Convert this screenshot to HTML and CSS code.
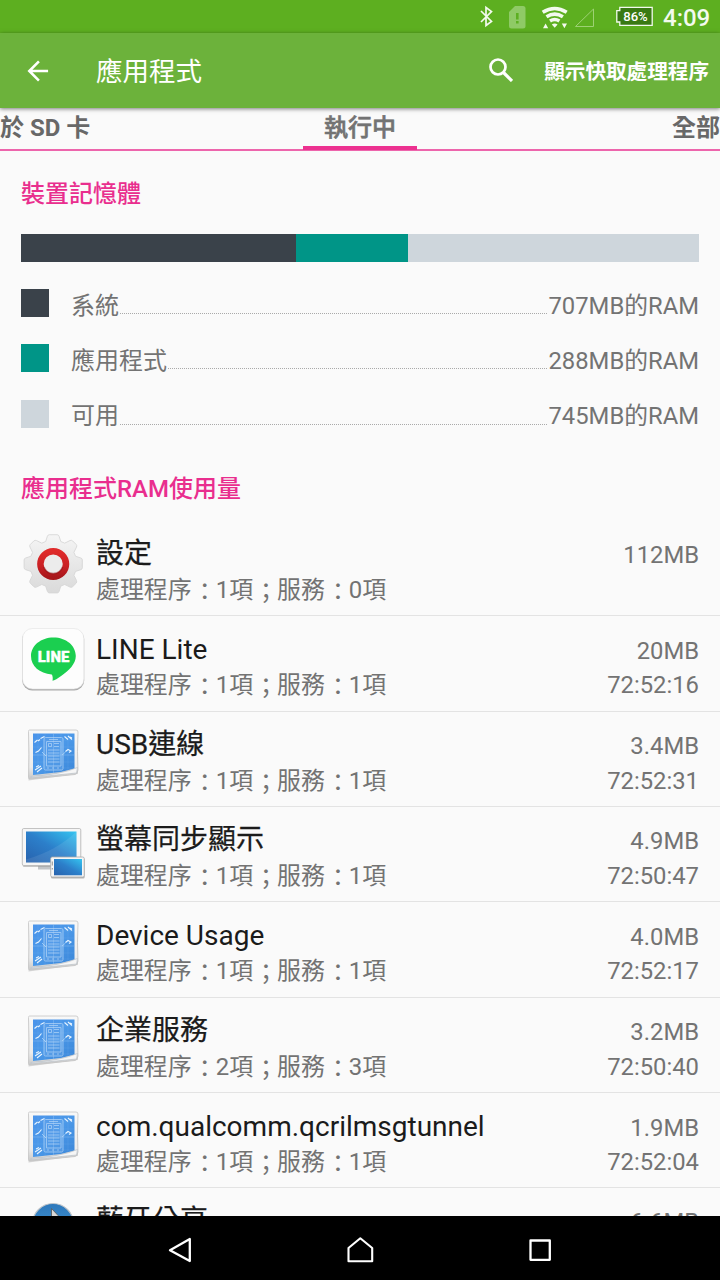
FILE: index.html
```html
<!DOCTYPE html>
<html lang="zh-Hant">
<head>
<meta charset="utf-8">
<title>應用程式</title>
<link rel="stylesheet" href="styles.css">
</head>
<body>
<svg class="defs" width="0" height="0" aria-hidden="true">
  <defs>
    <linearGradient id="sheet" x1="0" y1="0" x2="0" y2="1"><stop offset="0" stop-color="#f8f8f8"/><stop offset=".75" stop-color="#ececec"/><stop offset="1" stop-color="#c8c8c8"/></linearGradient>
    <linearGradient id="blueprint" x1="0" y1="0" x2="1" y2="1"><stop offset="0" stop-color="#4b94ea"/><stop offset=".5" stop-color="#4b98e8"/><stop offset="1" stop-color="#3a86d8"/></linearGradient>
    <linearGradient id="screen" x1="0" y1="1" x2="1" y2="0"><stop offset="0" stop-color="#2862ad"/><stop offset=".5" stop-color="#2c7fca"/><stop offset="1" stop-color="#35c4f0"/></linearGradient>
    <linearGradient id="gear" x1="0" y1="0" x2="0" y2="1"><stop offset="0" stop-color="#f5f5f5"/><stop offset="1" stop-color="#dadada"/></linearGradient>
    <linearGradient id="ring" x1="0" y1="0" x2="0" y2="1"><stop offset="0" stop-color="#df2a2a"/><stop offset=".6" stop-color="#c92024"/><stop offset="1" stop-color="#a8171b"/></linearGradient>
    <linearGradient id="ball" x1="0" y1="0" x2="0" y2="1"><stop offset="0" stop-color="#2d78bb"/><stop offset="1" stop-color="#4aa0de"/></linearGradient>
    <symbol id="app-icon" viewBox="0 0 64 64">
      <path d="M7.500 8.500h49L57 50 7.500 56.500z" fill="#999" opacity=".35" transform="translate(0 1)"/>
      <path d="M8.500 7H55q2 0 2 2-1 20 0 38-.5 4-3 4.500L9 56q-1.500 0-1.500-1.500 1-23 0-46Q7.500 7 8.500 7z" fill="url(#sheet)" stroke="#c4c4c4" stroke-width=".8"/>
      <path d="M12 10.500h41.500V45.500L40 49 12 52z" fill="url(#blueprint)"/>
      <path d="M10 53.500Q40 51.500 56.500 44.500l-1 5.500-45.500 4.500z" fill="#f6f6f6" stroke="#b4bcc4" stroke-width=".6"/>
      <path d="M17 11v40M24 11v40M40 11v38M47 11v36M12 17h41M12 24h41M12 39h41M12 45h40" stroke="#8fc1f4" stroke-width=".5" opacity=".3"/>
      <path d="M32.500 11v39M12 32h41" stroke="#8fc1f4" stroke-width=".9" opacity=".5"/>
      <path d="M24.500 14.500h16q1.500 0 1.500 1.500v29.500q0 1.500-1.500 1.500H24.500q-1.500 0-1.500-1.500V16q0-1.500 1.500-1.500zM25.500 18.500H40V43H25.500zM28 16.500h9" fill="#8abaf0" fill-opacity=".22" stroke="#b9d8f8" stroke-width="1" opacity=".7"/>
      <path d="M27.500 20.500h3v3h-3zM33 20.500h5M33 23.500h5M27 27h11.500M27 30h11.500M27 33h11.500M27 36h11.500M27 39h11.500M26 45h2m3 0h2m3 0h2" fill="none" stroke="#d6e9fc" stroke-width=".8" opacity=".65"/>
      <path d="m13.500 19.500 3-2.500M17 18l2-1.500M19.500 15.500l4-2M14.500 29.500l3-1.500 3-3.500M43.500 13.500l3.500 3M47 13l4 3.500M49 14l2 1M44.500 28.500l2.500-2 3 1.500-2 1.500M14 47l6-4M16 49l5-4M15 44l3-1.500" fill="none" stroke="#e8f4ff" stroke-width="1.100"/>
      <path d="m21 29 4 4M41 32l3.500-3" stroke="#bcdcfa" stroke-width=".7"/>
    </symbol>
  </defs>
</svg>
<div class="phone">
  <div class="status">
    <svg class="status-icons" viewBox="0 0 200 34" width="200" height="34">
      <path d="m1 11 10.500 10.500-5.500 4V7.500l5.500 4L1 22" fill="none" stroke="#f3faee" stroke-width="1.700"/>
      <path d="M35 6h8q2.500 0 2.500 2.500v17.500q0 2.500-2.500 2.500H31.500q-2.500 0-2.500-2.500V12z" fill="#8fca66"/>
      <path d="M36 13h2.600v6.500H36zM36 21h2.600v2.600H36z" fill="#5daf21"/>
      <path d="M62.700 12.300Q74.700 4.700 86.700 12.300M66.500 16.700Q74.700 11.500 82.900 16.700M70 21Q74.700 18 79.400 21" fill="none" stroke="#f3faee" stroke-width="3.500"/>
      <path d="m71.800 24.400q2.900-1.700 5.800 0L74.700 27.800zM63 28.300l2.600-4.800 2.600 4.800zM81.800 23.500h5.200l-2.600 4.800z" fill="#f3faee"/>
      <path d="M113.500 9v17.500H95.500z" fill="none" stroke="#9dd174" stroke-width="1"/>
      <path d="M139.800 7.300h32.400v18h-32.400v-3.300h-3v-11.400h3z" fill="#397a13" stroke="#f3faee" stroke-width="1.300"/>
      <text x="155.500" y="21.300" text-anchor="middle" class="battery" textLength="24.500" lengthAdjust="spacingAndGlyphs">86%</text>
    </svg>
    <span class="clock">4:09</span>
  </div>
  <header class="appbar">
    <svg class="back" viewBox="0 0 24 24" width="22" height="22"><path d="M23 12H3M13 1.500 2.500 12 13 22.500" fill="none" stroke="#fff" stroke-width="2.800"/></svg>
    <h1>應用程式</h1>
    <svg class="search" viewBox="0 0 24 24" width="24" height="24"><circle cx="9" cy="9" r="7.500" fill="none" stroke="#fff" stroke-width="2.700"/><path d="m14.500 14.500 8.500 8.500" stroke="#fff" stroke-width="3.200"/></svg>
    <span class="action">顯示快取處理程序</span>
  </header>
  <nav class="tabs">
    <span class="tab">於 SD 卡</span><span class="tab current">執行中</span><span class="tab last">全部</span>
  </nav>
  <main>
    <section class="memory">
      <h2>裝置記憶體</h2>
      <div class="bar"><i class="system"></i><i class="apps"></i><i class="free"></i></div>
      <div class="legend"><i class="system"></i><span>系統</span><b></b><span class="value">707MB的RAM</span></div>
      <div class="legend"><i class="apps"></i><span>應用程式</span><b></b><span class="value">288MB的RAM</span></div>
      <div class="legend"><i class="free"></i><span>可用</span><b></b><span class="value">745MB的RAM</span></div>
      <h2 class="usage">應用程式RAM使用量</h2>
    </section>
    <ul class="list">
      <li class="row">
        <svg class="icon" viewBox="0 0 64 64">
          <g transform="translate(1.200 -.7) scale(.97)">
            <path d="M28 2.500h8q1.500 0 2 1.500l1.800 5.500 4 1.700 5.500-2.700q1.500-.7 2.700.4l3.600 3.600q1.100 1.200.4 2.700l-2.700 5.500 1.700 4 5.500 1.800q1.500.5 1.500 2v8q0 1.500-1.500 2L55 40.300l-1.700 4 2.700 5.500q.7 1.500-.4 2.700L52 56.100q-1.200 1.100-2.700.4l-5.500-2.700-4 1.700L38 61q-.5 1.500-2 1.500h-8q-1.500 0-2-1.500l-1.800-5.500-4-1.700-5.500 2.700q-1.500.7-2.700-.4l-3.600-3.600q-1.100-1.200-.4-2.700l2.700-5.500-1.700-4L3.500 38.500Q2 38 2 36.500v-8q0-1.500 1.500-2L9 24.700l1.700-4L8 15.200q-.7-1.500.4-2.700L12 8.900q1.200-1.100 2.700-.4l5.500 2.700 4-1.700L26 4q.5-1.500 2-1.500z" fill="url(#gear)" stroke="#d6d6d6" stroke-width=".9" stroke-linejoin="round"/>
          </g>
          <circle cx="32.200" cy="31" r="12.800" fill="#ececec" stroke="url(#ring)" stroke-width="6.500"/>
          <path d="M22.800 34a10 10 0 0 0 18.800 0" fill="none" stroke="#8f1216" stroke-width="1.800" opacity=".5"/>
        </svg>
        <div class="text"><span class="title cjk">設定</span><span class="sub">處理程序<em>：</em>1項<em>；</em>服務<em>：</em>0項</span></div>
        <div class="stats"><span>112MB</span></div>
      </li>
      <li class="row">
        <svg class="icon" viewBox="0 0 64 64">
          <rect x="1.200" y="1.500" width="62" height="61" rx="10" fill="#aaa"/>
          <rect x="1.500" y=".5" width="61.400" height="60.500" rx="10" fill="#fdfdfd" stroke="#e2e2e2" stroke-width=".6"/>
          <path d="M32.500 9.500c12.500 0 22.300 8 22.300 18.500 0 8-7 14.500-14 19.500-4 3-7.500 5-9.300 5.200.5-2 .2-5.200-.8-6.200C18.500 45.500 10 38 10 28 10 17.500 20 9.500 32.500 9.500z" fill="#1bcf50"/>
          <text x="32.500" y="33.500" text-anchor="middle" class="logo" textLength="31.500" lengthAdjust="spacingAndGlyphs">LINE</text>
        </svg>
        <div class="text"><span class="title">LINE Lite</span><span class="sub">處理程序<em>：</em>1項<em>；</em>服務<em>：</em>1項</span></div>
        <div class="stats"><span>20MB</span><span>72:52:16</span></div>
      </li>
      <li class="row">
        <svg class="icon"><use href="#app-icon"/></svg>
        <div class="text"><span class="title cjk">USB連線</span><span class="sub">處理程序<em>：</em>1項<em>；</em>服務<em>：</em>1項</span></div>
        <div class="stats"><span>3.4MB</span><span>72:52:31</span></div>
      </li>
      <li class="row">
        <svg class="icon" viewBox="0 0 64 64">
          <path d="M17 44h15v6.500H17z" fill="#c2c5c8"/>
          <rect x="1.800" y="11" width="58" height="37" rx="1.500" fill="#999" opacity=".55"/>
          <rect x="1.300" y="9.500" width="58.500" height="37" rx="1.500" fill="#f6f6f6" stroke="#b5b5b5" stroke-width=".8"/>
          <path d="M5 12.500h50.500v31H5z" fill="url(#screen)"/>
          <path d="M5 40.500Q36 31.500 55.500 12.500v31H5z" fill="#fff" opacity=".09"/>
          <rect x="30" y="39" width="33.700" height="20.500" rx="1.500" fill="#888" opacity=".6"/>
          <rect x="29.700" y="38" width="33.500" height="20" rx="1.500" fill="#f6f6f6" stroke="#aaa" stroke-width=".8"/>
          <path d="M33 40h28v16.300H33z" fill="url(#screen)"/>
          <path d="M31.300 42.500v4M31.300 49v1.500" stroke="#888" stroke-width=".9"/>
        </svg>
        <div class="text"><span class="title cjk">螢幕同步顯示</span><span class="sub">處理程序<em>：</em>1項<em>；</em>服務<em>：</em>1項</span></div>
        <div class="stats"><span>4.9MB</span><span>72:50:47</span></div>
      </li>
      <li class="row">
        <svg class="icon"><use href="#app-icon"/></svg>
        <div class="text"><span class="title">Device Usage</span><span class="sub">處理程序<em>：</em>1項<em>；</em>服務<em>：</em>1項</span></div>
        <div class="stats"><span>4.0MB</span><span>72:52:17</span></div>
      </li>
      <li class="row">
        <svg class="icon"><use href="#app-icon"/></svg>
        <div class="text"><span class="title cjk">企業服務</span><span class="sub">處理程序<em>：</em>2項<em>；</em>服務<em>：</em>3項</span></div>
        <div class="stats"><span>3.2MB</span><span>72:50:40</span></div>
      </li>
      <li class="row">
        <svg class="icon"><use href="#app-icon"/></svg>
        <div class="text"><span class="title">com.qualcomm.qcrilmsgtunnel</span><span class="sub">處理程序<em>：</em>1項<em>；</em>服務<em>：</em>1項</span></div>
        <div class="stats"><span>1.9MB</span><span>72:52:04</span></div>
      </li>
      <li class="row">
        <svg class="icon" viewBox="0 0 64 64">
          <circle cx="32" cy="24" r="20.500" fill="url(#ball)" stroke="#bfc4c9" stroke-width="1.200"/>
          <path d="m30.500 8.500 16 17-16 17z" fill="#d9d9d9" stroke="#555" stroke-width=".8"/>
        </svg>
        <div class="text"><span class="title cjk">藍牙分享</span></div>
        <div class="stats"><span>6.6MB</span></div>
      </li>
    </ul>
  </main>
  <footer class="navbar">
    <svg viewBox="0 0 32 32"><path d="M25.800 5v22L6 16.200z" fill="none" stroke="#fff" stroke-width="2.300" stroke-linejoin="round"/></svg>
    <svg viewBox="0 0 32 32"><path d="M4.500 14 16.300 4.300 28.200 14v13.300H4.500z" fill="none" stroke="#fff" stroke-width="2.100" stroke-linejoin="round"/></svg>
    <svg viewBox="0 0 32 32"><path d="M6.500 6.500h19.300v19.300H6.500z" fill="none" stroke="#fff" stroke-width="2.300" stroke-linejoin="round"/></svg>
  </footer>
</div>
</body>
</html>
```
FILE: styles.css
```css
* { box-sizing: border-box; }
body { margin: 0; font-family: Roboto, "Noto Sans CJK TC", sans-serif; color: #737373; }
h1, h2, ul { margin: 0; padding: 0; }
i { display: block; }
.defs { position: absolute; }
.phone { width: 720px; height: 1280px; display: flex; flex-direction: column; overflow: hidden; background: #fafafa; }
.status { height: 33px; flex: none; background: #5daf20; display: flex; justify-content: flex-end; padding-right: 11px; }
.status-icons { flex: none; margin-right: -17px; }
.battery { font: 500 13.5px Roboto, sans-serif; fill: #fff; }
.clock { width: 46px; font-size: 24px; line-height: 36px; font-weight: 500; color: #f3faee; text-align: right; white-space: nowrap; }
.appbar { height: 75px; flex: none; display: flex; align-items: center; padding: 0 11px 0 27px; background: #6cb23b; color: #fff; box-shadow: 0 1px 4px rgba(0,0,0,.5); z-index: 1; }
.appbar h1 { margin: 2px 0 0 47px; font-size: 26.5px; line-height: 38px; font-weight: 400; flex: 1; }
.search { margin: 0 31px 2px 0; }
.action { font-size: 20.6px; line-height: 30px; font-weight: 700; white-space: nowrap; margin-top: 2px; }
.tabs { height: 43px; flex: none; display: grid; grid-template-columns: 1fr 114px 1fr; border-bottom: 2px solid #ed65ac; font-size: 24px; line-height: 40px; }
.tab { color: #686868; height: 42px; white-space: nowrap; font-weight: 700; }
.current { color: #737373; font-weight: 500; -webkit-text-stroke: .6px #737373; text-align: center; border-bottom: 4px solid #ec3190; }
.last { text-align: right; }
main { flex: 1; min-height: 0; overflow: hidden; }
.memory { padding: 26px 21px 0; height: 370px; }
h2 { color: #e92e8e; font-size: 24px; font-weight: 500; line-height: 34px; height: 34px; }
.bar { display: flex; height: 28px; margin: 23px 0 14px; }
.bar .system { width: 275px; }
.bar .apps { width: 112px; }
.bar .free { flex: 1; }
.system { background: #3a424a; }
.apps { background: #009587; }
.free { background: #ced6dc; }
.legend { display: flex; height: 55.300px; align-items: center; font-size: 24px; line-height: 34px; }
.legend i { width: 28px; height: 28px; margin: 0 22px 1px 0; }
.legend span { margin-top: 4px; }
.legend b { flex: 1; height: 1px; margin: 20px 1px 0; background: repeating-linear-gradient(90deg, #aaa 0 1px, transparent 1px 2px); }
.value { font-size: 23.800px; }
.memory .usage { margin-top: 30px; }
.list { list-style: none; }
.row { height: 95.350px; display: flex; border-bottom: 1px solid #e3e3e3; padding: 0 21px; }
.icon { width: 64px; height: 64px; flex: none; margin: 11.500px 11px 0 0; }
.text { flex: 1; display: flex; flex-direction: column; }
.title { color: #1b1b1b; font-size: 28px; line-height: 36px; height: 36px; margin-top: 16px; white-space: nowrap; }
.cjk { margin-top: 15px; -webkit-text-stroke: .25px #1b1b1b; }
.cjk + .sub { margin-top: 1px; }
.sub { font-size: 23.950px; line-height: 34px; white-space: nowrap; }
.sub em { font-style: normal; display: inline-block; line-height: 20px; transform: translate(1px, 2px); }
.stats { display: flex; flex-direction: column; align-items: flex-end; padding-top: 18px; font-size: 23.800px; line-height: 34px; }
.stats span { height: 34px; }
.row:has(.cjk) .stats { padding-top: 17px; }
.row:has(.cjk) .stats span { height: 35px; }
.logo { font: 900 15px Roboto, sans-serif; fill: #fff; stroke: #fff; stroke-width: .3px; }
.navbar { height: 64px; flex: none; background: #000; display: flex; justify-content: center; gap: 148px; padding-top: 18px; z-index: 1; }
.navbar svg { width: 32px; height: 32px; }
```
